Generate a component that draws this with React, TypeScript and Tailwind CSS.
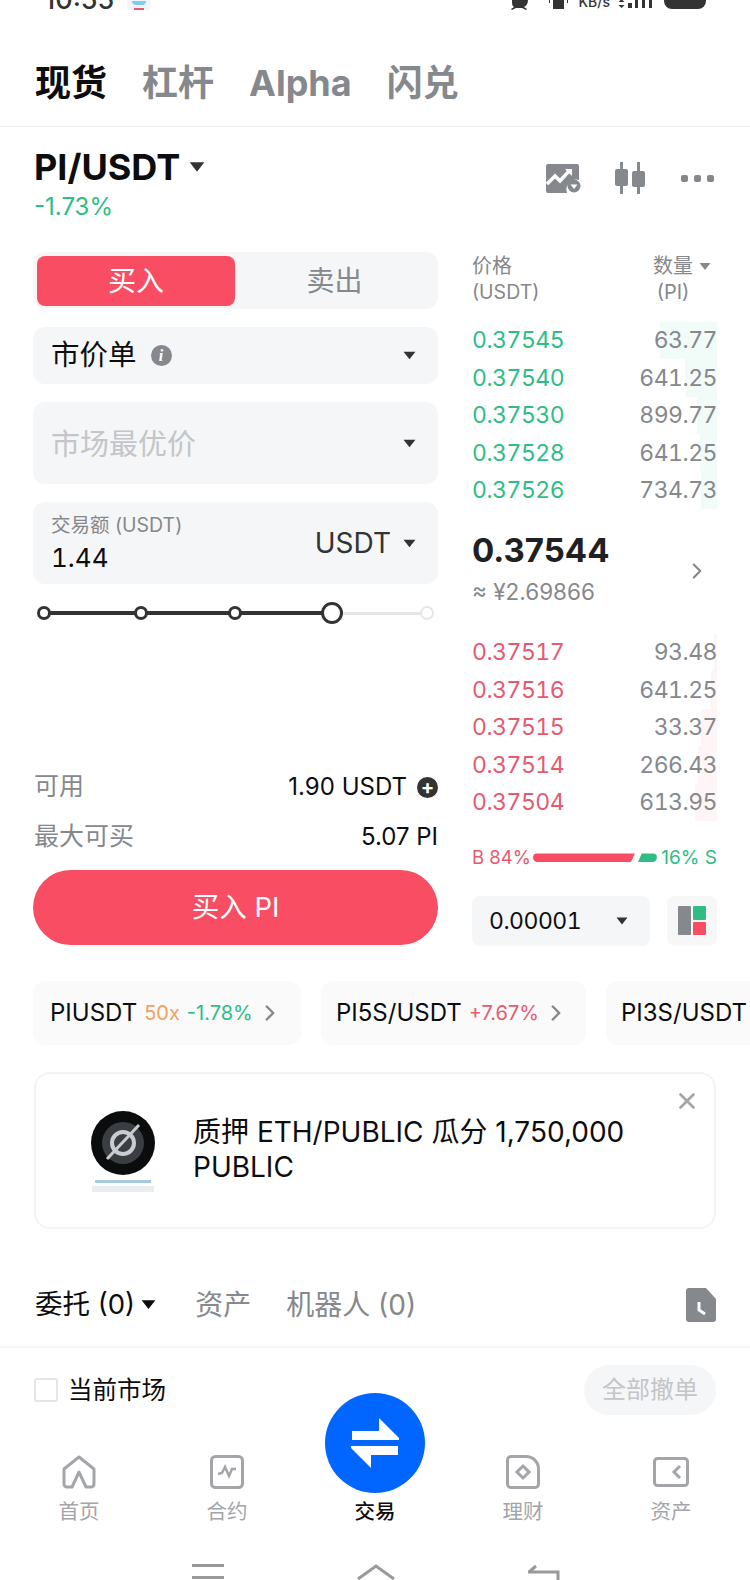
import { ChevronRight, X } from "lucide-react";

const ff = "font-['Inter','Noto_Sans_CJK_SC',sans-serif]";

const asks = [
  { price: "0.37545", qty: "63.77", bar: "w-[57px]" },
  { price: "0.37540", qty: "641.25", bar: "w-[32px]" },
  { price: "0.37530", qty: "899.77", bar: "w-[20px]" },
  { price: "0.37528", qty: "641.25", bar: "w-[17px]" },
  { price: "0.37526", qty: "734.73", bar: "w-[16px]" },
];

const bids = [
  { price: "0.37517", qty: "93.48", bar: "w-[3px]" },
  { price: "0.37516", qty: "641.25", bar: "w-[6px]" },
  { price: "0.37515", qty: "33.37", bar: "w-[16px]" },
  { price: "0.37514", qty: "266.43", bar: "w-[19px]" },
  { price: "0.37504", qty: "613.95", bar: "w-[22px]" },
];

function Caret({ className }: { className: string }) {
  return (
    <svg viewBox="0 0 12 8" className={className} fill="currentColor">
      <path d="M0.5 0.5h11L6 7.5z" />
    </svg>
  );
}

function BookRow({ price, qty, bar, tone, depth }: { price: string; qty: string; bar: string; tone: string; depth: string }) {
  return (
    <div className="relative flex h-[37.4px] items-center justify-between text-[23px] tabular-nums tracking-[-0.5px]">
      <div className={`absolute inset-y-0 right-0 ${bar} ${depth}`} />
      <span className={`relative ${tone}`}>{price}</span>
      <span className="relative text-[#85888c]">{qty}</span>
    </div>
  );
}

function Chip({ name, tag, change, tone, width, inset }: { name: string; tag?: string; change?: string; tone?: string; width: string; inset: string }) {
  return (
    <div className={`flex h-[64px] shrink-0 items-center rounded-xl bg-[#fafafa] ${inset} ${width}`}>
      <span className="text-[24px] text-[#0d0d0f]">{name}</span>
      {tag ? <span className="ml-[7px] text-[20px] text-[#f2a15f]">{tag}</span> : null}
      {change ? <span className={`ml-[7px] text-[20px] ${tone}`}>{change}</span> : null}
      {change ? <ChevronRight className="ml-[4px] h-[26px] w-[26px] text-[#85888c]" strokeWidth={2.25} /> : null}
    </div>
  );
}

function NavItem({ label, active, children }: { label: string; active?: boolean; children?: React.ReactNode }) {
  return (
    <div className="flex w-[148px] flex-col items-center">
      <div className="flex h-[38px] w-[38px] items-center justify-center">{children}</div>
      <span className={`mt-[7px] text-[20.5px] leading-[28px] ${active ? "font-medium text-[#0d0d0f]" : "text-[#a3a5a8]"}`}>{label}</span>
    </div>
  );
}

export default function App() {
  return (
    <div className={`relative h-[1580px] w-[750px] overflow-hidden bg-white ${ff}`}>
      {/* status bar, cut off at the top of the shot */}
      <div className="relative flex h-[10px] items-end justify-between overflow-hidden pl-[44px] pr-[44px]">
        <div className="flex items-end gap-[13px]">
          <span className="mb-[-8px] text-[27px] font-medium leading-[36px] text-[#333]">10:55</span>
          <div className="mb-[-1px] h-[30px] w-[24px] rounded-md bg-[#f2f5f8]">
            <div className="mx-auto mt-[20px] h-[4px] w-[14px] rounded-b-full bg-[#7ccdee]" />
            <div className="mx-auto mt-[3px] h-[2px] w-[10px] bg-[#e8557a]" />
          </div>
        </div>
        <div className="flex items-end">
          <svg viewBox="0 0 24 10" className="h-[10px] w-[24px]" fill="#333">
            <path d="M4 0h16c0 4-2 6-4 7l3 2-1 1-4-2H8l-4 2-1-1 3-2C4 6 4 4 4 0z" />
          </svg>
          <svg viewBox="0 0 24 10" className="ml-[14px] h-[10px] w-[24px]" fill="#333">
            <path d="M7 0h11v9H7zM3 0h1v3H3zM21 0h1v3h-1z" />
          </svg>
          <span className="mb-[1px] ml-[8px] text-[14px] font-medium leading-[14px] text-[#333]">KB/s</span>
          <svg viewBox="0 0 38 10" className="mb-[1px] ml-[8px] h-[10px] w-[38px]" fill="#333">
            <path d="M3.5 0l3 3h-6zM3.5 9l3-3h-6zM10 4h4v5h-4zM17 0h3v9h-3zM24 0h3v9h-3zM31 0h3v9h-3z" />
          </svg>
          <div className="mb-[1px] ml-[8px] h-[9px] w-[42px] rounded-b-lg bg-[#333]" />
        </div>
      </div>

      {/* top tabs */}
      <div className="flex h-[117px] items-center gap-[35px] border-b border-[#eeeeee] pl-[35px] pt-[30px] text-[36px] font-bold text-[#85888c]">
        <span className="text-[#0d0d0f]">现货</span>
        <span>杠杆</span>
        <span>Alpha</span>
        <span>闪兑</span>
      </div>

      {/* pair header */}
      <div className="flex h-[125px] items-start justify-between pl-[34px] pr-[36px]">
        <div>
          <div className="mt-[17px] flex items-center">
            <span className="text-[36px] font-bold leading-[46px] text-[#0d0d0f]">PI/USDT</span>
            <Caret className="ml-[9px] h-[12px] w-[16px] text-[#333]" />
          </div>
          <div className="mt-[3px] text-[24px] leading-[28px] text-[#2ebd85]">-1.73%</div>
        </div>
        <div className="mt-[35px] flex items-center">
          <svg viewBox="0 0 35 29" className="h-[29px] w-[35px]">
            <path d="M2 0h29a2 2 0 0 1 2 2v14a10 10 0 0 0-12 13H2a2 2 0 0 1-2-2V2a2 2 0 0 1 2-2z" fill="#85888c" />
            <path d="M1 20l8-8 5 5 10-11" fill="none" stroke="#fff" strokeWidth="3.5" />
            <path d="M19 5h7v7z" fill="#fff" />
            <circle cx="28" cy="22" r="6.5" fill="#85888c" />
            <path d="M24.5 20.5h7L28 25z" fill="#fff" />
          </svg>
          <svg viewBox="0 0 32 32" className="ml-[33px] h-[32px] w-[32px]" fill="#85888c">
            <path d="M6 0h3v7h3a2 2 0 0 1 2 2v13a2 2 0 0 1-2 2H9v8H6v-8H3a2 2 0 0 1-2-2V9a2 2 0 0 1 2-2h3zM23 0h3v9h3a2 2 0 0 1 2 2v12a2 2 0 0 1-2 2h-3v7h-3v-7h-3a2 2 0 0 1-2-2V11a2 2 0 0 1 2-2h3z" />
          </svg>
          <div className="ml-[35px] flex gap-[6px]">
            <div className="h-[7px] w-[7px] rounded-[2px] bg-[#85888c]" />
            <div className="h-[7px] w-[7px] rounded-[2px] bg-[#85888c]" />
            <div className="h-[7px] w-[7px] rounded-[2px] bg-[#85888c]" />
          </div>
        </div>
      </div>

      {/* order form + book */}
      <div className="flex pl-[33px] pr-[33px]">
        <div className="w-[405px] shrink-0">
          <div className="flex h-[57px] items-center rounded-xl bg-[#f5f6f7] px-[4px]">
            <div className="flex h-[50px] w-[198px] items-center justify-center rounded-lg bg-[#f94d63] text-[28px] text-white">买入</div>
            <div className="flex-1 text-center text-[28px] text-[#85888c]">卖出</div>
          </div>
          <div className="mt-[18px] flex h-[57px] items-center justify-between rounded-xl bg-[#f5f6f7] pl-[18px] pr-[22px]">
            <div className="flex items-center">
              <span className="text-[28.5px] text-[#0d0d0f]">市价单</span>
              <span className="ml-[14px] flex h-[21px] w-[21px] items-center justify-center rounded-full bg-[#85888c] font-['Liberation_Serif',serif] text-[16px] font-bold italic text-white">i</span>
            </div>
            <Caret className="h-[9px] w-[13px] text-[#333]" />
          </div>
          <div className="mt-[18px] flex h-[82px] items-center justify-between rounded-xl bg-[#f5f6f7] pl-[18px] pr-[22px]">
            <span className="pt-[3px] text-[29px] text-[#c3c5c8]">市场最优价</span>
            <Caret className="h-[9px] w-[13px] text-[#333]" />
          </div>
          <div className="mt-[18px] flex h-[82px] items-center justify-between rounded-xl bg-[#f5f6f7] pl-[18px] pr-[22px]">
            <div>
              <div className="text-[19.5px] leading-[24px] text-[#85888c]">交易额 (USDT)</div>
              <div className="mt-[5px] text-[26px] leading-[32px] tabular-nums text-[#0d0d0f]">1.44</div>
            </div>
            <div className="flex items-center">
              <span className="text-[28px] text-[#333]">USDT</span>
              <Caret className="ml-[12px] h-[9px] w-[13px] text-[#333]" />
            </div>
          </div>

          {/* slider */}
          <div className="relative mt-[18px] h-[22px]">
            <div className="absolute left-[10px] right-[10px] top-[9.5px] h-[3px] bg-[#e6e6e6]" />
            <div className="absolute left-[10px] top-[9px] h-[4px] w-[290px] bg-[#333]" />
            <div className="absolute left-[4px] top-[4px] h-[14px] w-[14px] rounded-full border-[3px] border-[#333] bg-white" />
            <div className="absolute left-[101px] top-[4px] h-[14px] w-[14px] rounded-full border-[3px] border-[#333] bg-white" />
            <div className="absolute left-[195px] top-[4px] h-[14px] w-[14px] rounded-full border-[3px] border-[#333] bg-white" />
            <div className="absolute left-[288px] top-0 h-[22px] w-[22px] rounded-full border-[3px] border-[#333] bg-white" />
            <div className="absolute left-[387px] top-[4px] h-[14px] w-[14px] rounded-full border-[2px] border-[#e6e6e6] bg-white" />
          </div>

          <div className="mt-[148px] flex h-[30px] items-center justify-between pl-[1px]">
            <span className="text-[25px] text-[#85888c]">可用</span>
            <div className="flex items-center">
              <span className="text-[24px] text-[#0d0d0f]">1.90 USDT</span>
              <span className="ml-[10px] flex h-[21px] w-[21px] items-center justify-center rounded-full bg-[#333] text-[20px] font-bold leading-none text-white">+</span>
            </div>
          </div>
          <div className="mt-[20px] flex h-[30px] items-center justify-between pl-[1px]">
            <span className="text-[25px] text-[#85888c]">最大可买</span>
            <span className="text-[24px] text-[#0d0d0f]">5.07 PI</span>
          </div>
          <div className="mt-[18px] flex h-[75px] items-center justify-center rounded-full bg-[#f94d63] text-[27.5px] text-white">买入 PI</div>
        </div>

        <div className="ml-[34px] flex-1 pt-[1px]">
          <div className="flex justify-between pr-[6px] text-[20px] leading-[26px] text-[#85888c]">
            <div>
              <div>价格</div>
              <div className="text-[19.5px]">(USDT)</div>
            </div>
            <div className="text-center">
              <div className="flex items-center">
                数量
                <Caret className="ml-[6px] h-[9px] w-[12px] text-[#85888c]" />
              </div>
              <div className="pr-[18px]">(PI)</div>
            </div>
          </div>
          <div className="mt-[17px]">
            {asks.map((r) => (
              <BookRow key={r.price} {...r} tone="text-[#2ebd85]" depth="bg-[#f1fbf7]" />
            ))}
          </div>
          <div className="flex h-[125px] items-start justify-between pr-[7px] pt-[21px]">
            <div>
              <div className="text-[33px] font-bold leading-[40px] text-[#1f2024]">0.37544</div>
              <div className="mt-[7px] text-[22.5px] leading-[30px] text-[#85888c]">≈ ¥2.69866</div>
            </div>
            <ChevronRight className="mt-[28px] h-[26px] w-[26px] text-[#85888c]" strokeWidth={2} />
          </div>
          <div>
            {bids.map((r) => (
              <BookRow key={r.price} {...r} tone="text-[#e65a70]" depth="bg-[#fff5f6]" />
            ))}
          </div>
          <div className="mt-[25px] flex h-[24px] items-center whitespace-nowrap text-[19px]">
            <span className="text-[18.5px] text-[#e65a70]">B 84%</span>
            <div className="ml-[2px] h-[9px] w-[102px] shrink-0 rounded-l-full bg-[#f94d63] [clip-path:polygon(0_0,100%_0,96%_100%,0_100%)]" />
            <div className="ml-[3px] h-[9px] w-[19px] shrink-0 rounded-r-full bg-[#2ebd85] [clip-path:polygon(20%_0,100%_0,100%_100%,0_100%)]" />
            <span className="ml-auto text-[#2ebd85]">16% S</span>
          </div>
          <div className="mt-[26px] flex justify-between">
            <div className="flex h-[50px] w-[178px] items-center justify-between rounded-lg bg-[#f5f6f7] pl-[17px] pr-[22px]">
              <span className="text-[23px] tabular-nums tracking-[-0.5px] text-[#0d0d0f]">0.00001</span>
              <Caret className="h-[8px] w-[12px] text-[#333]" />
            </div>
            <div className="flex h-[50px] w-[50px] items-center justify-center rounded-lg bg-[#f7f7f8]">
              <div className="flex h-[29px] w-[28px] gap-[2px]">
                <div className="w-[13px] rounded-[1px] bg-[#85888c]" />
                <div className="flex flex-1 flex-col gap-[2px]">
                  <div className="flex-1 rounded-[1px] bg-[#2ebd85]" />
                  <div className="flex-1 rounded-[1px] bg-[#f94d63]" />
                </div>
              </div>
            </div>
          </div>
        </div>
      </div>

      {/* related markets */}
      <div className="mt-[35px] flex gap-[20px] overflow-hidden pl-[33px]">
        <Chip name="PIUSDT" tag="50x" change="-1.78%" tone="text-[#2ebd85]" width="w-[268px]" inset="pl-[17px]" />
        <Chip name="PI5S/USDT" change="+7.67%" tone="text-[#e65a70]" width="w-[265px]" inset="pl-[15px]" />
        <Chip name="PI3S/USDT" width="w-[265px]" inset="pl-[15px]" />
      </div>

      {/* promo card */}
      <div className="relative mx-[34px] mt-[27px] flex h-[157px] items-center rounded-2xl border-2 border-[#f4f4f5] pl-[54px]">
        <div className="flex w-[66px] shrink-0 flex-col items-center">
          <svg viewBox="0 0 66 68" className="h-[68px] w-[66px]">
            <circle cx="33" cy="34" r="32" fill="#0b0c0e" />
            <circle cx="33" cy="34" r="21" fill="#3a3e43" />
            <circle cx="33" cy="34" r="11" fill="none" stroke="#c9ccd0" strokeWidth="4" />
            <path d="M17 50L49 16" stroke="#c9ccd0" strokeWidth="3" />
          </svg>
          <div className="mt-[3px] h-[3px] w-[56px] bg-[#a9c9de]" />
          <div className="mt-[3px] h-[6px] w-[62px] bg-[#e8eef0]" />
        </div>
        <div className="ml-[37px] w-[470px] text-[28px] leading-[35px] text-[#0d0d0f]">质押 ETH/PUBLIC 瓜分 1,750,000 PUBLIC</div>
        <X className="absolute right-[14px] top-[14px] h-[26px] w-[26px] text-[#a3a5a8]" strokeWidth={2.5} />
      </div>

      {/* orders tabs */}
      <div className="mt-[47px] flex h-[72px] items-center border-b-2 border-[#f5f5f6] pb-[12px] pl-[35px] pr-[34px] text-[28px]">
        <span className="text-[27.5px] text-[#0d0d0f]">委托 (0)</span>
        <Caret className="ml-[6px] h-[11px] w-[15px] text-[#0d0d0f]" />
        <span className="ml-[39px] text-[#85888c]">资产</span>
        <span className="ml-[35px] text-[#85888c]">机器人 (0)</span>
        <svg viewBox="0 0 30 34" className="ml-auto h-[34px] w-[30px]">
          <path d="M3 0h17l10 11v20a3 3 0 0 1-3 3H3a3 3 0 0 1-3-3V3a3 3 0 0 1 3-3z" fill="#85888c" />
          <path d="M13 14v8l6 4" fill="none" stroke="#fff" strokeWidth="3" />
        </svg>
      </div>
      <div className="mt-[17px] flex h-[50px] items-center justify-between pl-[34px] pr-[34px]">
        <div className="flex items-center">
          <div className="h-[24px] w-[24px] rounded-[3px] border-2 border-[#e4e5e7]" />
          <span className="ml-[10px] text-[24.5px] text-[#0d0d0f]">当前市场</span>
        </div>
        <div className="flex h-[50px] w-[132px] items-center justify-center rounded-full bg-[#f5f6f7] text-[24px] text-[#c3c5c8]">全部撤单</div>
      </div>

      {/* tab bar */}
      <div className="mt-[38px] flex pl-[5px]">
        <NavItem label="首页">
          <svg viewBox="0 0 34 34" className="h-[34px] w-[34px]" fill="none" stroke="#a3a5a8" strokeWidth="3" strokeLinejoin="round">
            <path d="M2 14L17 2l15 12v15a3 3 0 0 1-3 3h-5l-7-15-7 15H5a3 3 0 0 1-3-3z" />
          </svg>
        </NavItem>
        <NavItem label="合约">
          <svg viewBox="0 0 34 34" className="h-[34px] w-[34px]" fill="none">
            <rect x="1.5" y="1.5" width="31" height="31" rx="4" stroke="#a3a5a8" strokeWidth="3" />
            <path d="M8 19l4-1 3-6 4 9 3-7h4" stroke="#a3a5a8" strokeWidth="2.5" />
          </svg>
        </NavItem>
        <NavItem label="交易" active />
        <NavItem label="理财">
          <svg viewBox="0 0 34 34" className="h-[34px] w-[34px]" fill="none" stroke="#a3a5a8">
            <path d="M5 1.5h15C27 1.5 32.5 7 32.5 14v15a3.5 3.5 0 0 1-3.5 3.5H5A3.5 3.5 0 0 1 1.5 29V5A3.5 3.5 0 0 1 5 1.5z" strokeWidth="3" strokeLinejoin="round" />
            <path d="M17 11l6 6-6 6-6-6z" strokeWidth="3" />
          </svg>
        </NavItem>
        <NavItem label="资产">
          <svg viewBox="0 0 36 30" className="h-[30px] w-[36px]" fill="none" stroke="#a3a5a8" strokeWidth="3">
            <rect x="1.5" y="1.5" width="33" height="27" rx="3" />
            <path d="M27 9l-6 6 6 6" />
          </svg>
        </NavItem>
      </div>

      {/* android nav, cut off by the bottom edge */}
      <div className="absolute inset-x-0 bottom-0 flex h-[16px] items-start justify-center overflow-hidden">
        <div className="ml-[2px] flex flex-col gap-[9px]">
          <div className="h-[3px] w-[32px] bg-[#999]" />
          <div className="h-[3px] w-[32px] bg-[#999]" />
        </div>
        <svg viewBox="0 0 40 16" className="ml-[132px] h-[16px] w-[40px]" fill="none" stroke="#999" strokeWidth="3">
          <path d="M2 15L20 2l18 13" />
        </svg>
        <svg viewBox="0 0 34 16" className="ml-[130px] h-[16px] w-[34px]" fill="none" stroke="#999" strokeWidth="3">
          <path d="M2 8h30v8M10 2L3 8" />
        </svg>
      </div>

      {/* big trade button */}
      <div className="absolute left-[325px] top-[1393px] flex h-[100px] w-[100px] items-center justify-center rounded-full bg-[#0066ff]">
        <svg viewBox="0 0 48 50" className="h-[50px] w-[48px]" fill="#fff">
          <path d="M28 0l20 20v2H1v-9h27zM0 28h47v9H20v13L0 30z" />
        </svg>
      </div>
    </div>
  );
}
